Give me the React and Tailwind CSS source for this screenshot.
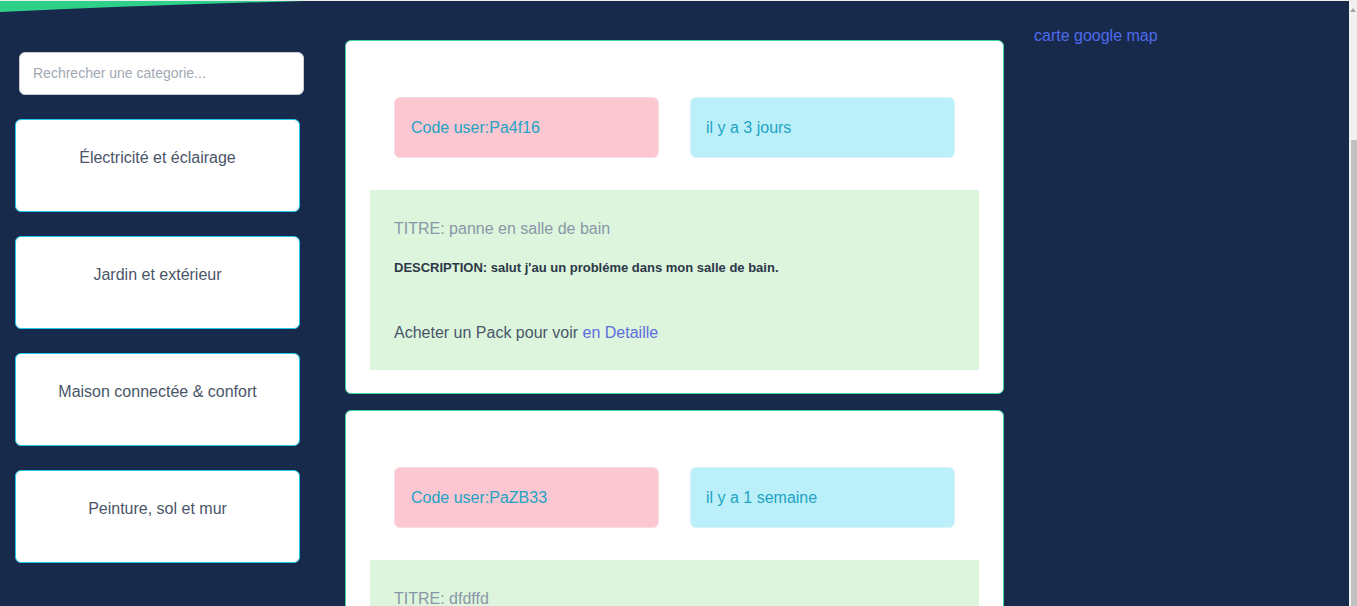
import React from "react";

const categories = [
  "Électricité et éclairage",
  "Jardin et extérieur",
  "Maison connectée & confort",
  "Peinture, sol et mur",
];

const posts = [
  {
    code: "Pa4f16",
    time: "il y a 3 jours",
    titre: "panne en salle de bain",
    desc: "salut j'au un probléme dans mon salle de bain.",
  },
  {
    code: "PaZB33",
    time: "il y a 1 semaine",
    titre: "dfdffd",
    desc: "dfdfdf",
  },
];

function PostCard({ p }) {
  return (
    <div className="w-[659px] shrink-0 rounded-md border border-[#3fd6a2] bg-white pt-[56px] px-[24px] pb-[23px]">
      <div className="flex gap-[31px] px-[24px]">
        <div className="flex h-[61px] w-[265px] items-center rounded-md border border-[#f3dde2] bg-[#fcc7d0] pl-[16px] text-[16px] text-[#22a3c4]">
          Code user:{p.code}
        </div>
        <div className="flex h-[61px] w-[265px] items-center rounded-md border border-[#d9f3f9] bg-[#bbf0fa] pl-[15px] text-[16px] text-[#22a3c4]">
          {p.time}
        </div>
      </div>
      <div className="mt-[32px] h-[180px] bg-[#dcf5dc] px-[24px] pt-[27px] pb-[24px]">
        <div className="text-[16px] leading-[24px] text-[#8a97a8]">TITRE: {p.titre}</div>
        <div className="mt-[17px] text-[13px] font-bold leading-[20px] text-[#2d3748]">
          DESCRIPTION: {p.desc}
        </div>
        <div className="mt-[43px] text-[16px] leading-[24px] text-[#4a5568]">
          Acheter un Pack pour voir <span className="text-[#5f6de0]">en Detaille</span>
        </div>
      </div>
    </div>
  );
}

export default function App() {
  return (
    <div
      className="relative flex h-[606px] w-full overflow-hidden bg-[#172a4b]"
      style={{ fontFamily: '"Liberation Sans", Arial, sans-serif' }}
    >
      <div className="absolute left-0 top-0 h-px w-full bg-[#ececec]" />
      <svg className="absolute left-0 top-[1px]" width="320" height="12" viewBox="0 0 320 12">
        <path d="M0 0 L305 0 Q150 4 0 11 Z" fill="#2fd08a" />
      </svg>

      <div className="flex flex-1 items-start">
        <div className="ml-[15px] flex w-[289px] shrink-0 flex-col pt-[52px]">
          <div className="ml-[4px] flex h-[43px] w-[285px] items-center rounded-md border border-[#c7ccd4] bg-white pl-[13px] text-[14px] text-[#a0a8b4]">
            Rechrecher une categorie...
          </div>
          <div className="mt-[24px] flex flex-col gap-[24px]">
            {categories.map((c) => (
              <div
                key={c}
                className="h-[93px] w-[285px] rounded-md border border-[#21c9ea] bg-white pt-[26px] text-center text-[16px] leading-[24px] text-[#4a5568]"
              >
                {c}
              </div>
            ))}
          </div>
        </div>

        <div className="ml-[41px] flex shrink-0 flex-col gap-[16px] pt-[40px]">
          {posts.map((p) => (
            <PostCard key={p.code} p={p} />
          ))}
        </div>

        <div className="ml-[30px] pt-[24px] text-[16px] leading-[24px] text-[#4f6bed]">
          carte google map
        </div>
      </div>

      <div className="flex w-[8px] shrink-0 flex-col bg-[#f1f1f1]">
        <div className="flex h-[140px] justify-center pt-[8px]">
          <svg width="6" height="4" viewBox="0 0 6 4">
            <path d="M3 0 L6 4 L0 4 Z" fill="#a3a3a3" />
          </svg>
        </div>
        <div className="ml-[2px] flex-1 bg-[#c1c1c1]" />
      </div>
    </div>
  );
}
